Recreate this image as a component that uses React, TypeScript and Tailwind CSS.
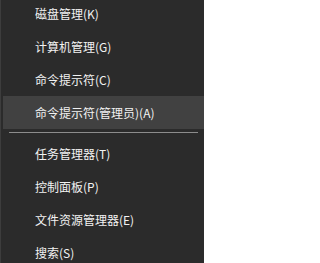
const topItems = ["磁盘管理(K)", "计算机管理(G)", "命令提示符(C)", "命令提示符(管理员)(A)"];
const bottomItems = ["任务管理器(T)", "控制面板(P)", "文件资源管理器(E)", "搜索(S)"];

const MenuItem = ({ label, active }: { label: string; active?: boolean }) => {
  return (
    <div
      className={`flex h-[33px] items-center pl-[32px] text-[12px] leading-none text-[#f2f2f2] ${
        active ? "bg-[#414141]" : ""
      }`}
    >
      {label}
    </div>
  );
};

export default function App() {
  return (
    <div
      className="h-[263px] w-[204px] overflow-hidden border-l border-[#3d3d3d] bg-[#2b2b2b] pl-[2px]"
      style={{ fontFamily: '"Microsoft YaHei", "Noto Sans CJK SC", sans-serif' }}
    >
      <div className="-mt-[3px] flex flex-col">
        {topItems.map((item, i) => (
          <MenuItem key={item} label={item} active={i === 3} />
        ))}
        <div className="mt-[3px] mb-[4px] ml-[6px] mr-[6px] h-px bg-[#8c8c8c]" />
        {bottomItems.map((item) => (
          <MenuItem key={item} label={item} />
        ))}
      </div>
    </div>
  );
}
